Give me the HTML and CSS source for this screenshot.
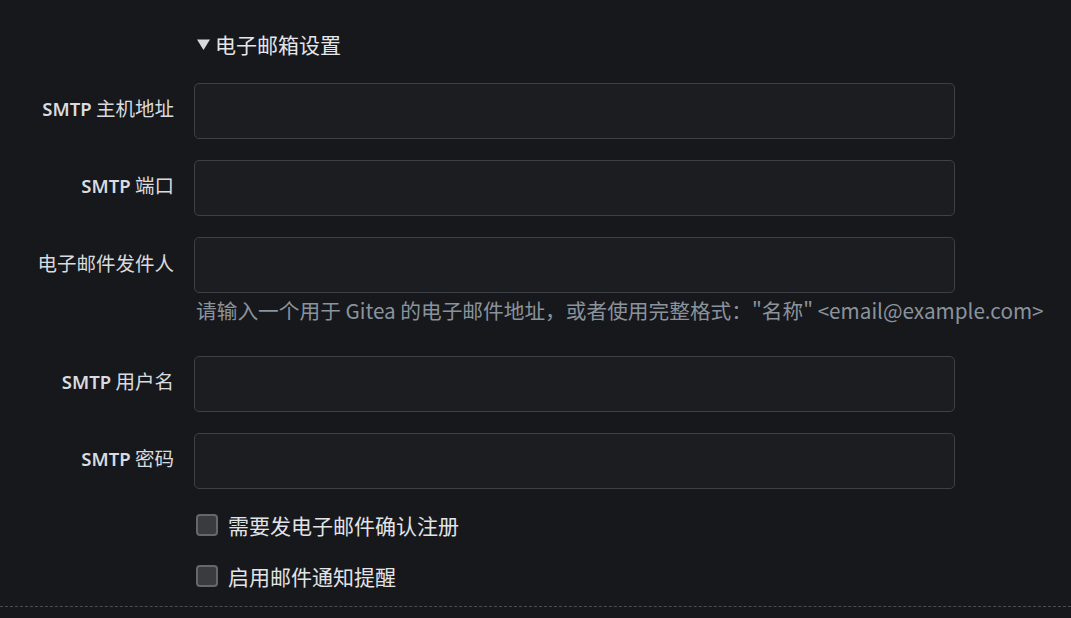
FILE: index.html
```html
<!DOCTYPE html>
<html lang="zh-CN">
<head>
<meta charset="utf-8">
<title>电子邮箱设置</title>
<link rel="stylesheet" href="styles.css">
</head>
<body>
<div class="page">
  <div class="section-title">
    <svg class="caret" width="15" height="13" viewBox="0 0 15 13"><path d="M1 1.5 H14 L7.5 12 Z" fill="#d6d9dd"/></svg>
    <span>电子邮箱设置</span>
  </div>

  <div class="field">
    <label class="label"><span class="latin">SMTP</span> 主机地址</label>
    <div class="input"></div>
  </div>
  <div class="field">
    <label class="label"><span class="latin">SMTP</span> 端口</label>
    <div class="input"></div>
  </div>
  <div class="field field-help">
    <label class="label">电子邮件发件人</label>
    <div class="input"></div>
    <div class="help">请输入一个用于 Gitea 的电子邮件地址，或者使用完整格式："名称" &lt;email@example.com&gt;</div>
  </div>
  <div class="field">
    <label class="label"><span class="latin">SMTP</span> 用户名</label>
    <div class="input"></div>
  </div>
  <div class="field">
    <label class="label"><span class="latin">SMTP</span> 密码</label>
    <div class="input"></div>
  </div>

  <div class="check first">
    <span class="box"></span>
    <span class="check-text">需要发电子邮件确认注册</span>
  </div>
  <div class="check">
    <span class="box"></span>
    <span class="check-text">启用邮件通知提醒</span>
  </div>

  <div class="divider"></div>
</div>
</body>
</html>
```

FILE: styles.css
```css
html, body {
  margin: 0;
  padding: 0;
  background: #17181c;
}

.page {
  width: 1071px;
  height: 618px;
  overflow: hidden;
  padding-top: 30px;
  box-sizing: border-box;
  font-family: "Noto Sans", "Noto Sans CJK SC", sans-serif;
  color: #dbdee2;
}

.section-title {
  display: flex;
  align-items: center;
  gap: 4px;
  margin-left: 196px;
  height: 28px;
  font-family: "Noto Sans CJK SC", sans-serif;
  font-size: 21px;
  color: #e4e6e9;
  margin-bottom: 25px;
}

.caret {
  display: block;
  margin-top: 0;
}

.field {
  display: grid;
  grid-template-columns: 174px 761px;
  column-gap: 20px;
  align-items: center;
  margin-bottom: 21px;
}

.label {
  text-align: right;
  font-family: "Noto Sans CJK SC", sans-serif;
  font-size: 19.5px;
  line-height: 26px;
  padding-bottom: 5px;
  color: #d8dbdf;
}

.latin {
  font-family: "Noto Sans", "Open Sans", sans-serif;
  font-weight: 600;
  font-size: 18.5px;
}

.input {
  height: 56px;
  box-sizing: border-box;
  border: 1px solid #3c4148;
  border-radius: 5px;
  background: #1c1d21;
}

.help {
  grid-column: 2;
  margin-left: 2px;
  padding-top: 4px;
  padding-bottom: 12px;
  line-height: 26px;
  font-family: "Noto Sans CJK SC", sans-serif;
  font-size: 20.7px;
  color: #8a939c;
  white-space: nowrap;
}

.check {
  display: flex;
  align-items: center;
  gap: 10px;
  margin-left: 196px;
  height: 30px;
  margin-top: 21px;
}

.check.first {
  margin-top: 1px;
}

.box {
  width: 22px;
  height: 22px;
  box-sizing: border-box;
  border: 2px solid #66676a;
  border-radius: 4px;
  background: #3b3b3d;
}

.check-text {
  font-family: "Noto Sans CJK SC", sans-serif;
  font-size: 21px;
  color: #e2e4e7;
  line-height: 30px;
}

.divider {
  margin-top: 15px;
  border-top: 1px dashed #4a4c50;
}
```
